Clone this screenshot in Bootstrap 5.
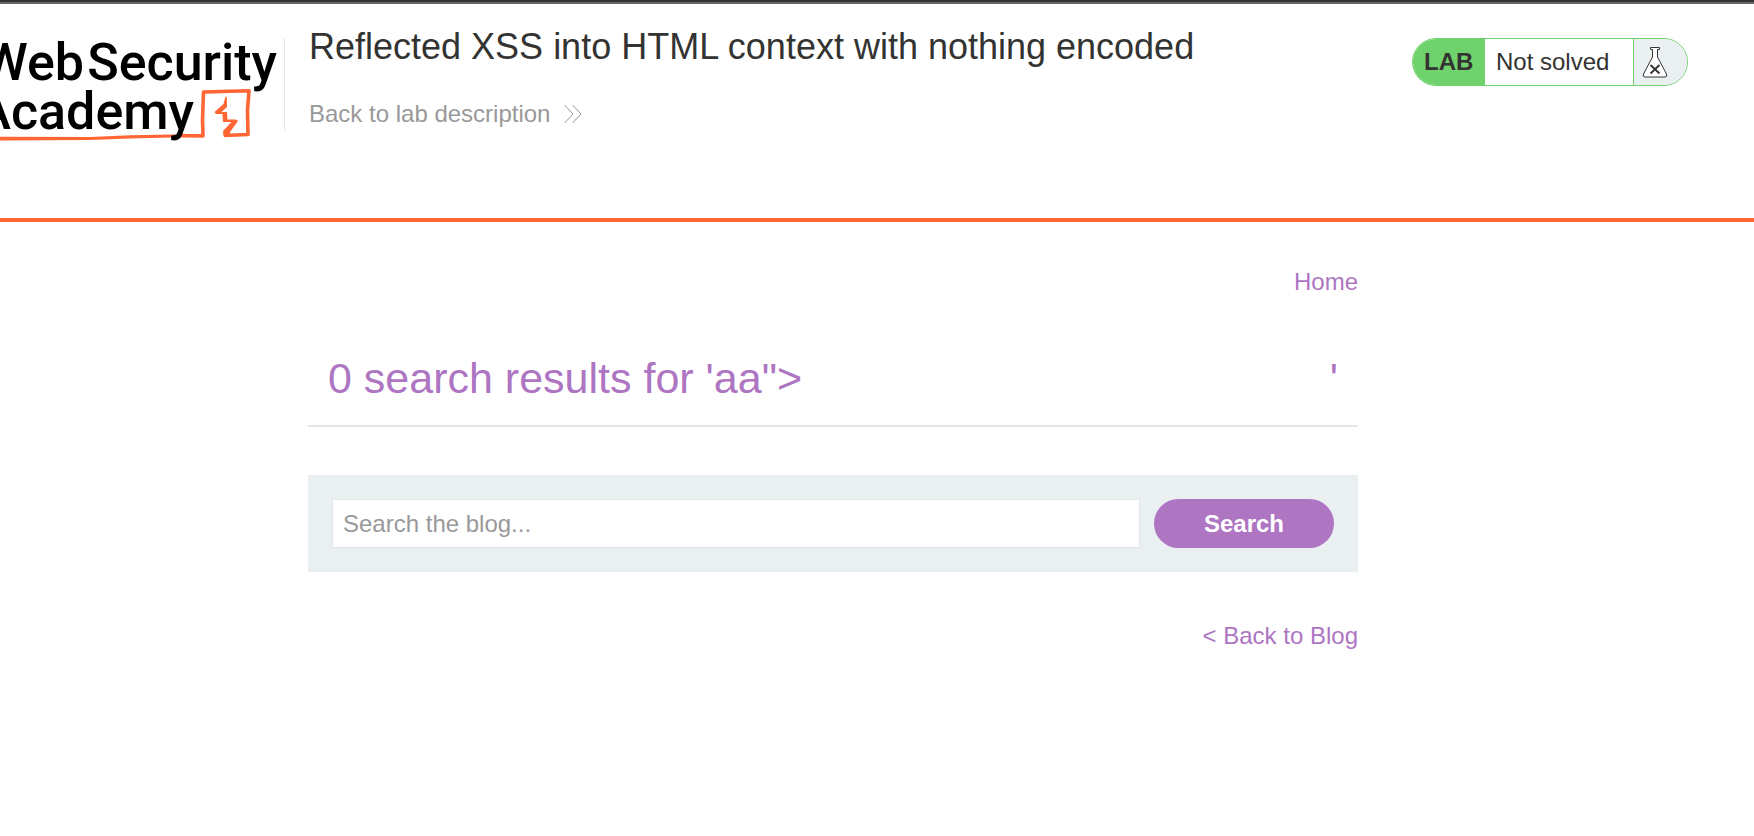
<!DOCTYPE html>
<html lang="en">
<head>
<meta charset="utf-8">
<meta name="viewport" content="width=device-width, initial-scale=1">
<title>Reflected XSS into HTML context with nothing encoded</title>
<link href="https://cdn.jsdelivr.net/npm/bootstrap@5.3.0/dist/css/bootstrap.min.css" rel="stylesheet">
<style>
  body { font-family: "Liberation Sans", Arial, sans-serif; font-size: 24px; line-height: 28px; color: #333332; background: #fff; }
  a { text-decoration: none; }
  .top-strip { height: 4px; background: #333332; border-bottom: 2px solid #666; }
  .lab-header { border-bottom: 4px solid #ff6633; min-height: 218px; padding-right: 66px; }
  .brand-logo { width: 284px; height: 154px; }
  .lab-info { border-left: 1px solid #e5e5e5; height: 93px; margin-top: 34px; padding-left: 24px; }
  .lab-title { font-size: 36px; line-height: 40px; margin: -11px 0 33px; }
  .lab-back { color: #999; gap: 14px; }
  .lab-status { height: 48px; margin-top: 34px; border: 1px solid #70d26d; border-radius: 24px; overflow: hidden; }
  .lab-tag { background: #70d26d; width: 72px; padding-left: 11px; }
  .lab-state { width: 148px; padding-left: 11px; }
  .lab-flask { background: #eaeff2; border-left: 1px solid #70d26d; width: 54px; padding-left: 8px; }
  .blog-wrap { padding-right: 88px; }
  .blog-column { max-width: 1050px; padding-top: 46px; }
  .blog-column a { color: #ad75c2; }
  .results-title { color: #ad75c2; font-size: 43px; line-height: 50px; margin: 57px 0 0; padding: 0 20px 22px; border-bottom: 2px solid #e5e5e5; }
  .search-panel { background: #eaeff2; margin: 48px 0 50px; padding: 24px; gap: 14px; }
  .search-panel .form-control { height: 49px; border: 1px solid #e5e5e5; padding: 0 10px; font-size: 24px; color: #333332; }
  .search-panel .form-control::placeholder { color: #999; }
  .search-panel .btn { width: 180px; height: 49px; padding: 0; background: #ad75c2; color: #fff; font-size: 24px; }
</style>
</head>
<body>
<div class="top-strip"></div>
<header class="lab-header d-flex align-items-start">
  <a href="#" aria-label="Web Security Academy" class="flex-shrink-0">
    <svg class="brand-logo d-block" viewBox="0 4 284 154">
      <path d="M0 136.800L90 137L130 135.300L202 134V137L172 137.500L130 138.500L90 140L0 140.500Z" fill="#ff6633"/>
      <path d="M180 135.500L203 136L202.500 120L203.500 92L249 90.800L247.500 110L248 134.500L224 135.500" fill="none" stroke="#ff6633" stroke-width="3.600" stroke-linejoin="round"/>
      <path d="M225.500 96.500L223.500 104L214.500 112L216 114L222.500 114L223 122H231.500L223 131L223.500 136.500L230 134.500V132L238 121L236 119.500H227.500L227 112H221.500L227 107L226.800 97Z" fill="#ff6633"/>
      <g font-family="Roboto, sans-serif" font-size="52" font-weight="500" fill="#000">
        <text x="84" y="80" text-anchor="end">Web</text>
        <text x="277" y="80" text-anchor="end">Security</text>
        <text x="194" y="129" text-anchor="end">Academy</text>
      </g>
    </svg>
  </a>
  <div class="lab-info">
    <h2 class="lab-title fw-normal">Reflected XSS into HTML context with nothing encoded</h2>
    <a href="#" class="lab-back d-inline-flex align-items-center">Back to lab description
      <svg width="18" height="20" viewBox="0 0 18 20" fill="none" stroke="#999"><path d="M0.500 1L9 10L0.500 19M8.500 1L17 10L8.500 19"/></svg>
    </a>
  </div>
  <div class="lab-status d-flex ms-auto flex-shrink-0">
    <strong class="lab-tag d-flex align-items-center">LAB</strong>
    <span class="lab-state d-flex align-items-center">Not solved</span>
    <span class="lab-flask d-flex align-items-center">
      <svg width="26" height="31" viewBox="0 0 26 31" fill="#fff" stroke="#333332"><path d="M8.500 .5H17.500V2.500H15.500V10L24.500 27Q25.500 30 23 30H3Q.500 30 1.500 27L10.500 10V2.500H8.500Z"/><path d="M8.500 18L17.500 26.500M17.500 18L8.500 26.500" stroke-width="1.900"/></svg>
    </span>
  </div>
</header>
<main class="blog-wrap">
  <div class="blog-column mx-auto">
    <nav class="text-end"><a href="#">Home</a></nav>
    <h1 class="results-title fw-normal d-flex justify-content-between"><span>0 search results for 'aa"&gt;</span><span>'</span></h1>
    <form class="search-panel d-flex" onsubmit="return false">
      <input type="text" class="form-control rounded-0 shadow-none" placeholder="Search the blog..." aria-label="Search the blog">
      <button type="submit" class="btn rounded-pill fw-bold border-0 flex-shrink-0">Search</button>
    </form>
    <div class="text-end"><a href="#">&lt; Back to Blog</a></div>
  </div>
</main>
<script src="https://cdn.jsdelivr.net/npm/bootstrap@5.3.0/dist/js/bootstrap.bundle.min.js"></script>
</body>
</html>
